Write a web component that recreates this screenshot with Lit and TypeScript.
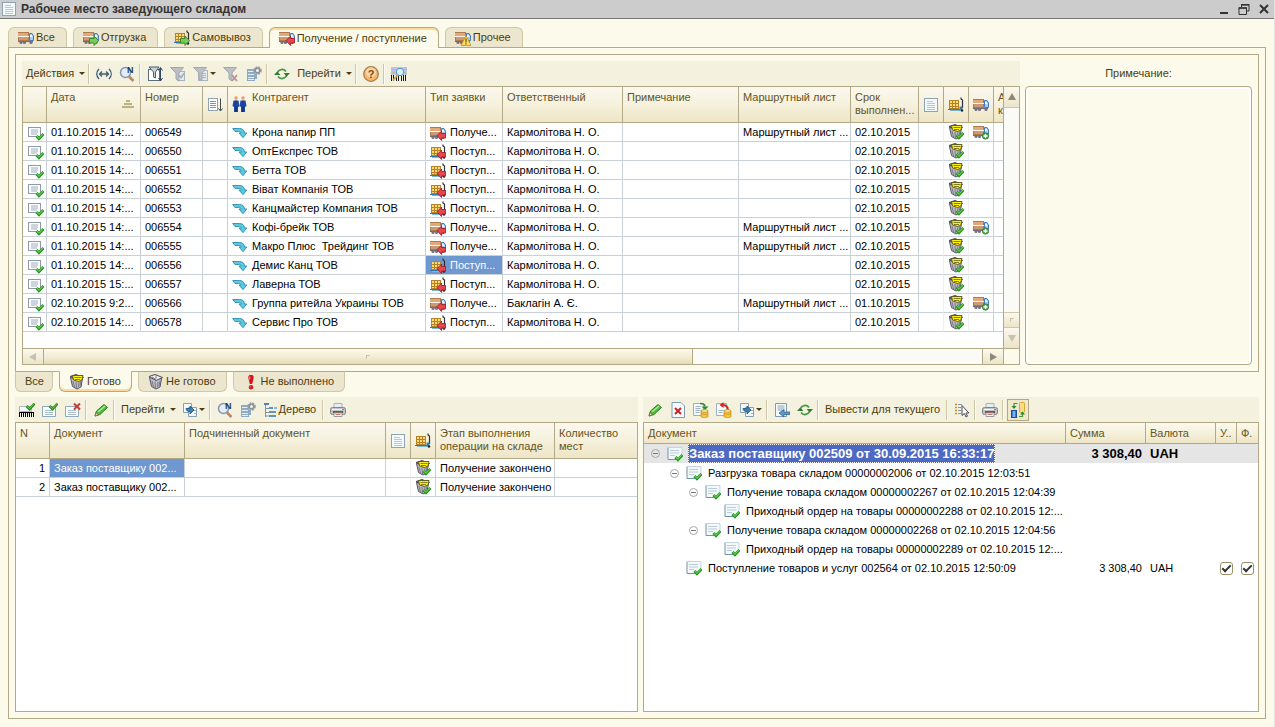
import { LitElement, html, svg, css, nothing, TemplateResult } from "lit";
import { customElement, state } from "lit/decorators.js";
import { classMap } from "lit/directives/class-map.js";
import { styleMap } from "lit/directives/style-map.js";

/* ---------- shared icon parts, all on a 16 x 16 grid ---------- */

const icon = (body: unknown, label = "") => html`<svg
  class="icon" viewBox="0 0 16 16" width="16" height="16"
  role=${label ? "img" : "presentation"} aria-label=${label || nothing}
>${body}</svg>`;

const truckBody = svg`
  <rect x="0" y="2" width="11" height="9" fill="#b07a50"/>
  <rect x="0" y="3" width="10" height="3" fill="#e3a978"/>
  <rect x="0" y="6" width="11" height="1" fill="#fff6ea"/>
  <rect x="1" y="7" width="9" height="3" fill="#c99a78"/>
  <rect x="0" y="11" width="15" height="1" fill="#6f6a74"/>
  <path d="M11.500 3.500h2.500l1.500 2.500v4.500h-4z" fill="#a9cdf2" stroke="#3f7cc4"/>
  <path d="M12 5h1.500l1 2H12z" fill="#f2f9ff"/>
  <circle cx="3" cy="12.500" r="1.600" fill="#77727e"/><circle cx="6.500" cy="12.500" r="1.600" fill="#77727e"/>
  <circle cx="13" cy="12.500" r="1.600" fill="#77727e"/>`;
const cartBody = svg`
  <rect x="1" y="3" width="10" height="9" fill="#b58226"/>
  <path d="M2 4h2v2H2zM5 4h2v2H5zM8 4h2v2H8zM2 7h2v2H2zM5 7h2v2H5zM8 7h2v2H8zM2 10h2v1H2zM5 10h2v1H5zM8 10h2v1H8z" fill="#fdd978"/>
  <path d="M0 12h12v1H0z" fill="#2b7bb0"/><path d="M2 13h10v1H2z" fill="#79b8de"/>
  <path d="M13 .500v1.500l1.500 1V11" fill="none" stroke="#2c3038" stroke-width="1.200"/>
  <path d="M11.500 9.500h3v4h-3z" fill="#3c80b4"/><circle cx="14" cy="13.500" r="1.200" fill="#20242c"/>`;
const greenArrow = svg`<path d="M6.500 8.500H11V6l4.600 4.700L11 15.500V13H6.500z" fill="#7cc95c" stroke="#2f8426" stroke-width=".9"/>`;
const redArrow = svg`<path d="M15.600 8.500h-4V6L7 10.700l4.600 4.800V13h4z" fill="#e4474c" stroke="#a01c26" stroke-width=".9"/>`;
const check = svg`<path d="M8.500 11l2.500 2.800L15.500 9" fill="none" stroke="#1f921f" stroke-width="2.800"/><path d="M8.900 11l2.100 2.200L15 9" fill="none" stroke="#62cc48" stroke-width="1.100"/>`;
const topCheck = svg`<path d="M7.500 4l3 3L15.500 1.500" fill="none" stroke="#2c8c1c" stroke-width="2.600"/><path d="M7.700 4l2.800 2.500L15 1.500" fill="none" stroke="#78cc54" stroke-width="1"/>`;
const sheet = svg`<rect x="1.500" y="1.500" width="13" height="13" fill="#f4f9fc" stroke="#8ea4b4"/><path d="M4 4.500h6M4 6.500h8M4 8.500h8M4 10.500h8M4 12.500h8" stroke="#b4c8d6"/>`;
const bin = (paper: boolean) => svg`
  <path d="M1.500 3.500l2 9 4.500 2.500 4-2 1.500-8.500z" fill="#bcbbc4" stroke="#555462"/>
  <path d="M4 7l1.500 6M7 8l.5 6M10 8l-.5 5M12 7l-1 5" stroke="#7c7b8a"/>
  <path d="M1 2.500L7 .500 14.500 3.500 8 6.500z" fill="${paper ? "#78758a" : "#f0f0f4"}" stroke="#4b4a58"/>
  ${paper ? svg`<path d="M3.500 1.500h10.500l-1 4.500-3.500 1.500-5-1.500z" fill="#fff200" stroke="#55541c" stroke-width=".9"/><path d="M5.500 3.500h7M6 5.500h5" stroke="#77741c" stroke-width=".9"/>` : svg`<path d="M4 3l4 2.500M8 1.500v3" stroke="#77768a"/>`}`;
const docLines = svg`<path d="M.5 4.500h13v10H.5z" fill="#fbfdfe" stroke="#8fa8ba"/><path d="M3 8.500h8M3 10.500h8M3 12.500h8" stroke="#a4bccc"/>`;
const gear = svg`<circle cx="11.500" cy="4.500" r="3" fill="none" stroke="#9a9fab" stroke-width="2.600" stroke-dasharray="1.600 .8"/><circle cx="11.500" cy="4.500" r="2.300" fill="none" stroke="#8a8f9c" stroke-width="1.500"/>`;
const funnel = (c: string, edge: string) => svg`<path d="M.5 1.500h13L9 7v8l-3-2V7z" fill="${c}" stroke="${edge}"/>`;
const coins = svg`<path d="M8 9v5.500c0 1.500 7 1.500 7 0V9z" fill="#f5c440" stroke="#c08a1c" stroke-width=".7"/><ellipse cx="11.500" cy="9" rx="3.500" ry="1.400" fill="#ffe68c" stroke="#c08a1c" stroke-width=".7"/><path d="M8 11.500c1 1.200 6 1.200 7 0" fill="none" stroke="#c08a1c" stroke-width=".7"/>`;
const lens = svg`<circle cx="6.500" cy="6.500" r="5" fill="#e2effa" stroke="#8a97a6" stroke-width="1.500"/><path d="M10 10.500l4.500 4.500" stroke="#b98a66" stroke-width="2.600"/>`;

const ICONS: Record<string, TemplateResult | unknown> = {
  truck: truckBody,
  truckOut: svg`${truckBody}${greenArrow}`,
  truckIn: svg`${truckBody}${redArrow}`,
  truckAdd: svg`${truckBody}<circle cx="12.500" cy="12" r="3.200" fill="#4fa04c" stroke="#2c7a32" stroke-width=".7"/><path d="M12.500 10v4M10.500 12h4" stroke="#fff" stroke-width="1.300"/>`,
  truckWarn: svg`${truckBody}<path d="M11 5.500l5 10H6z" fill="#ffdc5c" stroke="#c48e1c" stroke-width=".8"/><path d="M11 8.500v4M11 13.300v1.200" stroke="#6c520c" stroke-width="1.200"/>`,
  cart: cartBody,
  cartOut: svg`${cartBody}${greenArrow}`,
  cartIn: svg`${cartBody}${redArrow}`,
  sheet,
  docRow: svg`<rect x=".5" y="2.500" width="12" height="9" fill="#fcfdfe" stroke="#8f9aa8"/><path d="M3 5h7M3 7h7M3 9h6" stroke="#a0acba"/>${check}`,
  docTree: svg`<path d="M1 2h14v11H1z" fill="#f3f8fb"/><path d="M1 1.500v12M1 13.500h8" stroke="#6f93a8"/><path d="M1 1.500h14v7" fill="none" stroke="#c5d5de"/><path d="M3 4.500h9M3 7h9M3 9.500h5" stroke="#b9ccd8"/>${check}`,
  bent: svg`<path d="M.7 3.500H7.500c3 0 4.800 1.500 5 4.500h2.300L11 12.700 7 8h2.200c-.2-1-.9-1.500-2.400-1.500H3z" fill="#5ccad8" stroke="#2a8cb4" stroke-width=".9"/>`,
  sortDoc: svg`<rect x="1.500" y="1.500" width="9" height="12" fill="#fff" stroke="#8ea4b4"/><path d="M3 4.500h6M3 6.500h6M3 8.500h6M3 10.500h6" stroke="#8296a6"/><path d="M13.500 1.500v12M11.500 11.500l2 2.500 2-2.500" fill="none" stroke="#404850"/>`,
  people: svg`<circle cx="4" cy="2" r="1.700" fill="#e89a6c"/><circle cx="11" cy="2" r="1.700" fill="#e89a6c"/><path d="M1.500 4.500h5l1 6-1.500.5v5H2v-5L.5 10z" fill="#1b46a8"/><path d="M8.500 4.500h5l1 5.500-1.500 1v5H9v-5L7.500 10z" fill="#1b46a8"/><path d="M4 4.500v3M11 4.500v3" stroke="#3c2c6c"/><path d="M4 10v6M11 10v6" stroke="#0c2670"/>`,
  width: svg`<path d="M3 3c-3 3-3 7 0 10M13 3c3 3 3 7 0 10M3.500 8h9M6 5.500L3.500 8 6 10.500M10 5.500L12.500 8 10 10.500" fill="none" stroke="#3f5c74" stroke-width="1.300"/>`,
  find: svg`${lens}<text x="8" y="7" font-size="9" font-weight="bold" font-family="Liberation Sans, sans-serif" fill="#223c58">N</text>`,
  filterBox: svg`<rect x="1.500" y="3.500" width="11" height="11" fill="#fff" stroke="#5c6c7c"/><path d="M2 1h10L8.500 6v6l-2-1V6z" fill="#c8d2da" stroke="#4c5c6c"/><path d="M13.500 2v13M11.500 4.500l2-3 2 3M11.500 12l2 3 2-3" fill="none" stroke="#33475c"/>`,
  filterDoc: svg`<rect x="7.500" y="5.500" width="7" height="9" fill="#e4ebef" stroke="#aab6be"/><path d="M9 9.500l2 2 3-4" fill="none" stroke="#a0aab0" stroke-width="1.500"/>${funnel("#bcc0c4", "#a2a8ae")}`,
  filterList: svg`<rect x="5.500" y="4.500" width="9" height="10" fill="#e4ebef" stroke="#aab6be"/><path d="M9 7.500h4M9 9.500h4M9 11.500h4" stroke="#aab6be"/>${funnel("#bcc0c4", "#a2a8ae")}`,
  filterOff: svg`${funnel("#bcc0c4", "#a2a8ae")}<path d="M9 9l5 6M14 9l-5 6" stroke="#bb9298" stroke-width="1.800"/>`,
  settings: svg`<path d="M1 3h8v12H1z" fill="#8fabc1"/><path d="M2 5.500h6M2 8.500h8M2 11.500h8M2 13.500h6" stroke="#e6f0f6"/><path d="M8 8h3v5H8z" fill="#8fabc1"/>${gear}`,
  refresh: svg`<path d="M3.500 6.500c1-3 6-4.500 8.500-1" fill="none" stroke="#4c9a48" stroke-width="1.800"/><path d="M12.500 9.500c-1 3-6 4.500-8.500 1" fill="none" stroke="#4c9a48" stroke-width="1.800"/><path d="M9.500 7H16l-3.200 3.500zM0 9h6.500L3.200 5.500z" fill="#2f7d30"/>`,
  help: svg`<circle cx="8" cy="8" r="7.300" fill="#f5b86c" stroke="#a8794c" stroke-width="1.200"/><circle cx="8" cy="6.500" r="5" fill="#fbd9a6"/><text x="8" y="12" text-anchor="middle" font-size="11" font-weight="bold" font-family="Liberation Sans, sans-serif" fill="#7c4a20">?</text>`,
  barcodeFind: svg`<path d="M0 1h16v8H0z" fill="#c4bcee"/><path d="M0 3.500h16M0 6.500h16" stroke="#9cd08c"/><path d="M.5 9v6M2.500 9v6M5.500 9v6M7.500 9v6M10.500 9v6M12.500 9v6M14.500 9v6" stroke="#14181c"/><circle cx="9" cy="6" r="3.700" fill="#d4f0fb" stroke="#4c9cc4"/><path d="M6.500 9L2 14.500" stroke="#e0a040" stroke-width="1.800"/>`,
  barcodeOk: svg`<path d="M.5 4.500h12v5H.5z" fill="#f4f8fa" stroke="#a9bac6"/><path d="M.5 10v5M2.500 10v5M4.500 10v5M6.500 10v5M8.500 10v5M10.500 10v5M12.500 10v5M14.500 10v5" stroke="#000"/><path d="M0 10.500h15" stroke="#000"/>${topCheck}`,
  docOk: svg`${docLines}${topCheck}`,
  docDel: svg`${docLines}<path d="M9 1.500l6 6M15 1.500l-6 6" stroke="#cc3a3a" stroke-width="2"/>`,
  pencil: svg`<path d="M2 14l1.500-5L11 2.500l3.500 3L7 12.500z" fill="#4cb83c" stroke="#23781c" stroke-width=".9"/><path d="M5 10l7-6" stroke="#a8ec8c" stroke-width="1.600"/><path d="M2 14l1-3.500L5.500 13z" fill="#f0d8a0" stroke="#5c5020" stroke-width=".6"/>`,
  forward: svg`<path d="M1.500 1.500h8v9h-8z" fill="#f2f8fb" stroke="#84a0b4"/><path d="M6.500 5.500h8v9h-8z" fill="#f2f8fb" stroke="#84a0b4"/><path d="M12 8.500h2M12 11.500h2" stroke="#9cb4c4"/><path d="M4 6.500h4V4l4 4-4 4V9.500C5.500 9.500 4 8.500 4 6.500z" fill="#3f80b4" stroke="#1f5078" stroke-width=".8"/>`,
  treeList: svg`<path d="M1 1h5v2H1z" fill="#4c86b4"/><path d="M2.500 3v12M2.500 6.500h4M2.500 10.500h4M2.500 14h4" fill="none" stroke="#7c94a8"/><path d="M6 5h4v2H6zM6 9h7v2H6zM6 13h7v2H6z" fill="#5c96c0"/><path d="M11 5h3v2h-3z" fill="#8cb8d8"/>`,
  print: svg`<path d="M4 1.500h8v5H4z" fill="#e3eefa" stroke="#a3b4c4"/><rect x=".5" y="5.500" width="15" height="7" rx="2" fill="#c4c2c0" stroke="#858388"/><path d="M2 7.500h12" stroke="#f6f4f2"/><path d="M3 9h10v2H3z" fill="#5c5a60"/><path d="M4 11h8v3.500H4z" fill="#fff" stroke="#9c9a9c"/><path d="M5.500 12.500h5" stroke="#dc7464"/><rect x="12" y="7" width="2" height="1" fill="#4cb43c"/>`,
  docRemove: svg`<path d="M2 .500h9l3.500 3.500v11.500H2z" fill="#f5fafd" stroke="#7f9cb4"/><path d="M5 6l6 6M11 6l-6 6" stroke="#c82424" stroke-width="2"/>`,
  docIn: svg`<path d="M.5 1.500h10v12H.5z" fill="#f5fafd" stroke="#9bb0c0"/><path d="M2.500 4.500h5M2.500 6.500h5M2.500 8.500h5M2.500 10.500h4" stroke="#9bb0c0"/><path d="M7 1.500c3 0 5 .5 5 3" fill="none" stroke="#2f8c34" stroke-width="1.600"/><path d="M8.500 4.500h7L12 8z" fill="#2f8c34"/>${coins}`,
  docBack: svg`<path d="M.5 1.500h10v12H.5z" fill="#f5fafd" stroke="#9bb0c0"/><path d="M2.500 8.500h5M2.500 10.500h4" stroke="#9bb0c0"/><path d="M12 8c0-4-2-5-6-5" fill="none" stroke="#d42a1c" stroke-width="1.800"/><path d="M7.500 0v6L3.500 3z" fill="#d42a1c"/>${coins}`,
  listIn: svg`<path d="M1.500 1.500h11v13h-11z" fill="#f5fafd" stroke="#8099ac"/><path d="M3.500 4h7M3.500 6h7M3.500 8h7" stroke="#8aa3b6"/><path d="M16 10h-6V7.500L5 11l5 4v-2.500h6z" fill="#5c98c8" stroke="#2a5f8c" stroke-width=".7"/>`,
  pick: svg`<path d="M1 2.500h2M1 5.500h2M1 8.500h2M1 11.500h2" stroke="#d08c2c" stroke-width="1.500"/><path d="M4 2.500h4M4 5.500h3M4 8.500h3M4 11.500h3" stroke="#7c94b0" stroke-width="1.200"/><path d="M8 3.500v10l2.300-2 1.700 3.500 1.500-.8-1.600-3.200h3z" fill="#fff" stroke="#4c4c54"/>`,
  columns: svg`<rect x="9.500" y=".5" width="5" height="10" rx="1" fill="#fbdc84" stroke="#d8a838"/><rect x="1.500" y="8.500" width="5" height="7" fill="#3c7ce0" stroke="#1f4ca0"/><path d="M4 9v6" stroke="#cfe2ff"/><path d="M7.500 1.500H4V4M9 14.500h3.500V12" fill="none" stroke="#3c9a3c" stroke-width="1.200"/><path d="M1.500 4h5L4 7zM10 12.500h5l-2.500-3z" fill="#2c8a2c"/>`,
  binFull: bin(true),
  binOk: svg`${bin(true)}${check}`,
  binEmpty: bin(false),
  bang: svg`<path d="M8 1c3 0 3 2 2.300 4.500L9.200 10H6.800L5.700 5.500C5 3 5 1 8 1z" fill="#d8141c"/><circle cx="8" cy="13.300" r="2.200" fill="#d8141c"/><path d="M6.800 2.500v3M7.300 12.500v1" stroke="#ff9c98"/>`,
};
const ic = (name: string, label = "") => icon(ICONS[name], label);

/* ---------- data ---------- */

interface Order {
  date: string; num: string; partner: string; delivery: boolean;
  owner: string; route: boolean; due: string; truck: boolean; current?: boolean;
}
const K = "Кармолітова Н. О.";
const order = (date: string, num: string, partner: string, delivery = false, route = false, truck = false,
  owner = K, due = "02.10.2015", current = false): Order => ({ date, num, partner, delivery, owner, route, due, truck, current });

const ORDERS: Order[] = [
  order("01.10.2015 14:...", "006549", "Крона папир ПП", true, true, true),
  order("01.10.2015 14:...", "006550", "ОптЕкспрес ТОВ"),
  order("01.10.2015 14:...", "006551", "Бетта ТОВ"),
  order("01.10.2015 14:...", "006552", "Віват Компанія ТОВ"),
  order("01.10.2015 14:...", "006553", "Канцмайстер Компания ТОВ"),
  order("01.10.2015 14:...", "006554", "Кофі-брейк ТОВ", true, true, true),
  order("01.10.2015 14:...", "006555", "Макро Плюс  Трейдинг ТОВ", true, true),
  order("01.10.2015 14:...", "006556", "Демис Канц ТОВ", false, false, false, K, "02.10.2015", true),
  order("01.10.2015 15:...", "006557", "Лаверна ТОВ"),
  order("02.10.2015 9:2...", "006566", "Группа ритейла Украины ТОВ", true, true, true, "Баклагін А. Є.", "01.10.2015"),
  order("02.10.2015 14:...", "006578", "Сервис Про ТОВ"),
];

interface Node { level: number; text: string; open?: boolean; sum?: string; cur?: string; flags?: boolean; root?: boolean }
const TREE: Node[] = [
  { level: 0, text: "Заказ поставщику 002509 от 30.09.2015 16:33:17", open: true, sum: "3 308,40", cur: "UAH", root: true },
  { level: 1, text: "Разгрузка товара складом 00000002006 от 02.10.2015 12:03:51", open: true },
  { level: 2, text: "Получение товара складом 00000002267 от 02.10.2015 12:04:39", open: true },
  { level: 3, text: "Приходный ордер на товары 00000002288 от 02.10.2015 12:..." },
  { level: 2, text: "Получение товара складом 00000002268 от 02.10.2015 12:04:56", open: true },
  { level: 3, text: "Приходный ордер на товары 00000002289 от 02.10.2015 12:..." },
  { level: 1, text: "Поступление товаров и услуг 002564 от 02.10.2015 12:50:09", sum: "3 308,40", cur: "UAH", flags: true },
];

const TOP_TABS = [
  ["truck", "Все"], ["truckOut", "Отгрузка"], ["cartOut", "Самовывоз"],
  ["truckIn", "Получение / поступление"], ["truckWarn", "Прочее"],
];
const STATE_TABS = [["", "Все"], ["binFull", "Готово"], ["binEmpty", "Не готово"], ["bang", "Не выполнено"]];

const sep = html`<span class="sep"></span>`;
const caret = html`<span class="caret"></span>`;
const tool = (name: string, title: string, menu = false, pressed = false) => html`<button
  class=${classMap({ tool: true, pressed })} title=${title} aria-label=${title}>${ic(name)}${menu ? caret : nothing}</button>`;
const textTool = (text: string, menu = false, name = "") => html`<button
  class=${classMap({ tool: true, text: true, menu })}>${name ? ic(name) : nothing}${text}${menu ? caret : nothing}</button>`;

@customElement("app-root")
export class AppRoot extends LitElement {
  static styles = css`
    :host {
      display: flex; flex-direction: column; min-height: 100vh; box-sizing: border-box;
      background: #fcfaeb; border-right: 1px solid #e3e3e3; color: #000;
      font: 11px/13px "Liberation Sans", Arial, sans-serif;
      --line: #b3a986; --ink: #4d3c0c; --head: #65541c; --grid: #c9d0d6;
    }
    * { box-sizing: border-box; }
    button, input, textarea { font: inherit; color: inherit; margin: 0; }
    button { border: 0; padding: 0; background: none; }
    .icon { display: block; flex: none; }

    .title { display: flex; align-items: center; height: 19px; padding: 0 0 0 1px; background: #ccc; border-bottom: 1px solid #777; }
    .title h1 { flex: 1; margin: 0 0 0 4px; font-size: 12px; line-height: 16px; font-weight: bold; color: #333; }
    .wbtn { width: 20px; height: 16px; display: grid; place-items: center; }

    .page { flex: 1; display: flex; flex-direction: column; padding: 8px; }
    .tabs { display: flex; gap: 6px; position: relative; color: var(--ink); }
    .tabs.top { margin-bottom: -1px; height: 21px; }
    .tabs.low { margin-top: -1px; margin-bottom: 5px; height: 21px; align-items: flex-start; }
    .tab { display: flex; align-items: center; gap: 2px; height: 20px; padding: 0 10px 0 9px; background: #ece6cf; border: 1px solid #cfc7a6; white-space: nowrap; }
    .top .tab { border-bottom: 0; border-radius: 6px 6px 0 0; padding-right: 11px; }
    .low .tab { border-top-color: var(--line); border-radius: 0 0 6px 6px; height: 21px; }
    .low .tab:first-child { padding-right: 8px; }
    .tab.on { height: 21px; background: #fcfaeb; border-color: var(--line); }
    .top .tab.on { box-shadow: inset 0 2px #fbdc9c; }
    .low .tab.on { border-top-color: #fcfaeb; box-shadow: inset 0 -2px #fbdc9c; }

    .outer { flex: 1; display: flex; flex-direction: column; border: 1px solid var(--line); padding: 6px; }
    .upper { display: flex; gap: 5px; border: 1px solid var(--line); padding: 6px; }
    .list { flex: 1; min-width: 0; }
    .note { flex: none; width: 227px; display: flex; flex-direction: column; }
    .note label { height: 25px; line-height: 25px; text-align: center; color: var(--ink); }
    .note textarea { flex: 1; resize: none; border: 1px solid var(--line); border-radius: 4px; background: #fcfaeb; box-shadow: inset 0 0 0 2px #fff; outline: 0; }

    .bar { display: flex; align-items: center; height: 25px; background: #f4f1de; color: var(--ink); }
    .tool { display: flex; align-items: center; height: 22px; padding: 0 3px 0 4px; white-space: nowrap; }
    .tool.text { padding: 0 5px 0 4px; }
    .tool.text.menu { padding-right: 2px; }
    .tool.pressed { border: 1px solid var(--line); background: #efe8cb; padding: 0 2px; margin-left: 1px; }
    .caret { border: 3px solid transparent; border-top-color: var(--ink); border-bottom: 0; margin-left: 5px; }
    .tool:not(.text) .caret { margin-left: 1px; }
    .sep { width: 2px; height: 20px; margin: 0 2px 0 1px; background: linear-gradient(90deg, #cdc5a4 50%, #fffef6 50%); }

    .frame { border: 1px solid var(--line); background: #fff; }
    .grid { display: grid; grid-template-columns: minmax(0, 1fr) 16px; grid-template-rows: auto 16px; }
    .view { padding-bottom: 16px; overflow: hidden; }
    table { width: 100%; border-collapse: separate; border-spacing: 0; table-layout: fixed; }
    th, td { padding: 0 4px; overflow: hidden; white-space: pre; text-align: left; }
    th { height: 36px; padding-top: 4px; vertical-align: top; font-weight: normal; color: var(--head);
      background: linear-gradient(#fbf9ee, #f6f1dd 50%, #ede5c5); border-right: 1px solid var(--line); border-bottom: 1px solid var(--line); }
    th.mid { vertical-align: middle; padding: 0 4px; }
    td { height: 19px; padding-top: 1px; border-right: 1px solid var(--grid); border-bottom: 1px solid var(--grid); }
    th:last-child, td:last-child { border-right: 0; }
    .flex { display: flex; align-items: center; gap: 4px; }
    .people { display: flex; gap: 4px; }
    .people .icon { margin-top: 5px; }
    .pad { padding-left: 5px; }
    .pic { padding-top: 0; }
    .faint { border-right-color: #eef0f2; }
    .sel { background: #6f97d0; color: #fff; }
    .r { text-align: right; }
    .spread { display: flex; justify-content: space-between; }
    .up { display: flex; flex-direction: column; align-items: center; gap: 1px; padding: 9px 2px 0 0; }
    .up i { height: 2px; background: #bcb27a; }
    .up i:nth-child(1) { width: 4px; } .up i:nth-child(2) { width: 8px; } .up i:nth-child(3) { width: 12px; }

    .vs { display: flex; flex-direction: column; border-left: 1px solid var(--line); background: #fafaf6; }
    .hs { display: flex; border-top: 1px solid var(--line); background: #fafaf6; }
    .corner { border-left: 1px solid var(--line); border-top: 1px solid var(--line); background: #fcfaeb; }
    .sb { flex: none; display: grid; place-items: center; background: linear-gradient(#fbf9ee, #ece4c8); }
    .vs .sb { height: 21px; border-bottom: 1px solid #cfc7a6; }
    .vs .sb:last-child { height: 20px; border-bottom: 0; }
    .vs .thumb { height: 16px; border-top: 1px solid #cfc7a6; }
    .hs .sb { width: 21px; border-right: 1px solid var(--line); }
    .hs .sb:last-child { border-right: 0; border-left: 1px solid var(--line); }
    .hs .thumb { width: auto; flex: 649 0 0; background: linear-gradient(#fbf9ec, #f1ebcf 60%, #e5dcb6); }
    .gap { flex: 1; }
    .hs .gap { flex: 290 0 0; }
    .dot { width: 4px; height: 4px; border: 1px solid #c6bfa2; border-right-color: transparent; border-bottom-color: transparent; }

    .lower { flex: 1; display: grid; grid-template-columns: 623fr 616fr; gap: 5px; }
    .pane { display: flex; flex-direction: column; min-width: 0; }
    .pane .frame { flex: 1; }
    .bright td { border: 0; }
    .bright th { height: 21px; }
    .tree { display: flex; align-items: center; }
    .knob { width: 9px; height: 9px; border: 1px solid #a7a7a7; border-radius: 5px; margin: 0 7px 0 3px; display: grid; place-items: center; flex: none; }
    .knob::after { content: ""; width: 5px; height: 1px; background: #777; }
    .knob.none { visibility: hidden; }
    .tree .icon { margin-right: 6px; }
    .root .tree .icon { margin-right: 5px; }
    .bright tr.root td { background: #e5e5e5; font-size: 13px; font-weight: bold; padding-top: 0; }
    .root .name { background: #4e69c3; color: #fff; outline: 1px dotted #fff; outline-offset: -1px; line-height: 19px; padding: 0 1px; }
    input.tick { appearance: none; display: grid; place-items: center; width: 13px; height: 13px; border: 1px solid #9a9068; border-radius: 3px; background: #fff; }
    input.tick::after { content: ""; width: 7px; height: 3px; border: solid #333; border-width: 0 0 2px 2px; transform: translateY(-1px) rotate(-45deg); }
  `;

  @state() private topTab = 3;
  @state() private stateTab = 1;

  private tabs(list: string[][], where: string, active: number, pick: (i: number) => void) {
    return html`<div class="tabs ${where}" role="tablist">${list.map(([name, text], i) => html`<button
      class=${classMap({ tab: true, on: i === active })} role="tab" aria-selected=${i === active}
      @click=${() => pick(i)}>${name ? ic(name) : nothing}<span>${text}</span></button>`)}</div>`;
  }

  private cols(widths: number[]) {
    return html`<colgroup>${widths.map((w) => html`<col style=${styleMap(w ? { width: `${w}px` } : {})} />`)}</colgroup>`;
  }

  private orders() {
    return html`<table>
      ${this.cols([24, 94, 62, 25, 0, 77, 120, 116, 112, 68, 25, 25, 25, 9])}
      <thead><tr>
        <th></th>
        <th><div class="spread">Дата<span class="up"><i></i><i></i><i></i></span></div></th>
        <th>Номер</th><th class="mid">${ic("sortDoc", "Порядок")}</th>
        <th><div class="people">${ic("people")}Контрагент</div></th>
        <th>Тип заявки</th><th>Ответственный</th><th>Примечание</th><th>Маршрутный лист</th>
        <th>Срок<br />выполнен...</th>
        <th class="mid">${ic("sheet", "Документ")}</th><th class="mid">${ic("cart", "Склад")}</th>
        <th class="mid">${ic("truck", "Доставка")}</th><th>А<br />к</th>
      </tr></thead>
      <tbody>${ORDERS.map((o) => html`<tr>
        <td class="pad">${ic("docRow")}</td><td>${o.date}</td><td>${o.num}</td><td></td>
        <td><span class="flex">${ic("bent")}${o.partner}</span></td>
        <td class=${o.current ? "sel" : ""}><span class="flex">${ic(o.delivery ? "truckIn" : "cartIn")}${o.delivery ? "Получе..." : "Поступ..."}</span></td>
        <td>${o.owner}</td><td></td><td>${o.route ? "Маршрутный лист ..." : ""}</td><td>${o.due}</td>
        <td class="faint"></td><td class="faint pic">${ic("binOk", "Готово")}</td>
        <td class="pic">${o.truck ? ic("truckAdd", "Доставка") : nothing}</td><td></td>
      </tr>`)}</tbody>
    </table>`;
  }

  private documents() {
    return html`<table>
      ${this.cols([34, 135, 0, 25, 25, 119, 82])}
      <thead><tr>
        <th>N</th><th>Документ</th><th>Подчиненный документ</th>
        <th class="mid">${ic("sheet", "Документ")}</th><th class="mid">${ic("cart", "Склад")}</th>
        <th>Этап выполнения<br />операции на складе</th><th>Количество<br />мест</th>
      </tr></thead>
      <tbody>${[1, 2].map((n) => html`<tr>
        <td class="r">${n}</td><td class=${n === 1 ? "sel" : ""}>Заказ поставщику 002...</td><td></td>
        <td class="faint"></td><td class="pic">${ic("binOk", "Готово")}</td><td>Получение закончено</td><td></td>
      </tr>`)}</tbody>
    </table>`;
  }

  private tree() {
    return html`<table class="bright">
      ${this.cols([0, 80, 70, 21, 21])}
      <thead><tr><th>Документ</th><th>Сумма</th><th>Валюта</th><th>У..</th><th>Ф.</th></tr></thead>
      <tbody>${TREE.map((n) => html`<tr class=${n.root ? "root" : ""}>
        <td><span class="tree" style=${styleMap({ paddingLeft: `${n.level * 19}px` })}>
          <span class=${classMap({ knob: true, none: !n.open })}></span>${ic("docTree")}<span class="name">${n.text}</span></span></td>
        <td class="r">${n.sum ?? ""}</td><td>${n.cur ?? ""}</td>
        ${["Управленческий учет", "Финансовый учет"].map((l) => html`<td>${n.flags
          ? html`<input class="tick" type="checkbox" checked aria-label=${l} />` : nothing}</td>`)}
      </tr>`)}</tbody>
    </table>`;
  }

  render() {
    const arrow = (d: string, c = "#8c8878") => html`<svg class="icon" width="8" height="8" viewBox="0 0 8 8"><path d=${d} fill=${c} /></svg>`;
    return html`
      <header class="title">
        ${ic("sheet")}<h1>Рабочее место заведующего складом</h1>
        <button class="wbtn" aria-label="Свернуть"><svg class="icon" width="10" height="10" viewBox="0 0 10 10"><path d="M1 8h8v2H1z" fill="#333" /></svg></button>
        <button class="wbtn" aria-label="Восстановить"><svg class="icon" width="12" height="11" viewBox="0 0 12 11"><path d="M3.500 3V1H11v6H9M1 4h7.500v6.500H1z" fill="none" stroke="#333" /><path d="M3 .500h8.500M.500 4h8.500" stroke="#333" stroke-width="1.500" /></svg></button>
        <button class="wbtn" aria-label="Закрыть"><svg class="icon" width="10" height="10" viewBox="0 0 10 10"><path d="M1 1l8 8M9 1L1 9" stroke="#333" stroke-width="2" /></svg></button>
      </header>
      <main class="page">
        ${this.tabs(TOP_TABS, "top", this.topTab, (i) => (this.topTab = i))}
        <section class="outer">
          <div class="upper">
            <div class="list">
              <div class="bar" role="toolbar">
                ${textTool("Действия", true)}${sep}
                ${tool("width", "Ширина")}${tool("find", "Найти")}${sep}
                ${tool("filterBox", "Отбор")}${tool("filterDoc", "Отбор по значению")}${tool("filterList", "История отборов", true)}
                ${tool("filterOff", "Отключить отбор")}${tool("settings", "Настройка списка")}${sep}
                ${tool("refresh", "Обновить")}${textTool("Перейти", true)}${sep}
                ${tool("help", "Справка")}${sep}${tool("barcodeFind", "Поиск по штрихкоду")}
              </div>
              <div class="frame grid">
                <div class="view">${this.orders()}</div>
                <div class="vs">
                  <span class="sb">${arrow("M0 7L4 0l4 7z")}</span><span class="gap"></span>
                  <span class="sb thumb"><i class="dot"></i></span><span class="sb">${arrow("M0 1l4 7 4-7z", "#c6c2b0")}</span>
                </div>
                <div class="hs">
                  <span class="sb">${arrow("M7 0v8L0 4z", "#c6c2b0")}</span><span class="sb thumb"><i class="dot"></i></span>
                  <span class="gap"></span><span class="sb">${arrow("M1 0v8l7-4z")}</span>
                </div>
                <div class="corner"></div>
              </div>
            </div>
            <div class="note"><label for="note">Примечание:</label><textarea id="note"></textarea></div>
          </div>
          ${this.tabs(STATE_TABS, "low", this.stateTab, (i) => (this.stateTab = i))}
          <div class="lower">
            <div class="pane">
              <div class="bar" role="toolbar">
                ${tool("barcodeOk", "Отметить по штрихкоду")}${tool("docOk", "Отметить")}${tool("docDel", "Снять отметку")}${sep}
                ${tool("pencil", "Изменить")}${sep}${textTool("Перейти", true)}${tool("forward", "Ввести на основании", true)}${sep}
                ${tool("find", "Найти")}${tool("settings", "Настройка списка")}${textTool("Дерево", false, "treeList")}${sep}
                ${tool("print", "Печать")}
              </div>
              <div class="frame">${this.documents()}</div>
            </div>
            <div class="pane">
              <div class="bar" role="toolbar">
                ${tool("pencil", "Изменить")}${tool("docRemove", "Пометить на удаление")}${tool("docIn", "Провести")}
                ${tool("docBack", "Отменить проведение")}${tool("forward", "Ввести на основании", true)}${sep}
                ${tool("listIn", "Вывод списка")}${tool("refresh", "Обновить")}${sep}
                ${textTool("Вывести для текущего")}${sep}${tool("pick", "Выбор")}${sep}
                ${tool("print", "Печать")}${sep}${tool("columns", "Порядок колонок", false, true)}
              </div>
              <div class="frame">${this.tree()}</div>
            </div>
          </div>
        </section>
      </main>`;
  }
}
